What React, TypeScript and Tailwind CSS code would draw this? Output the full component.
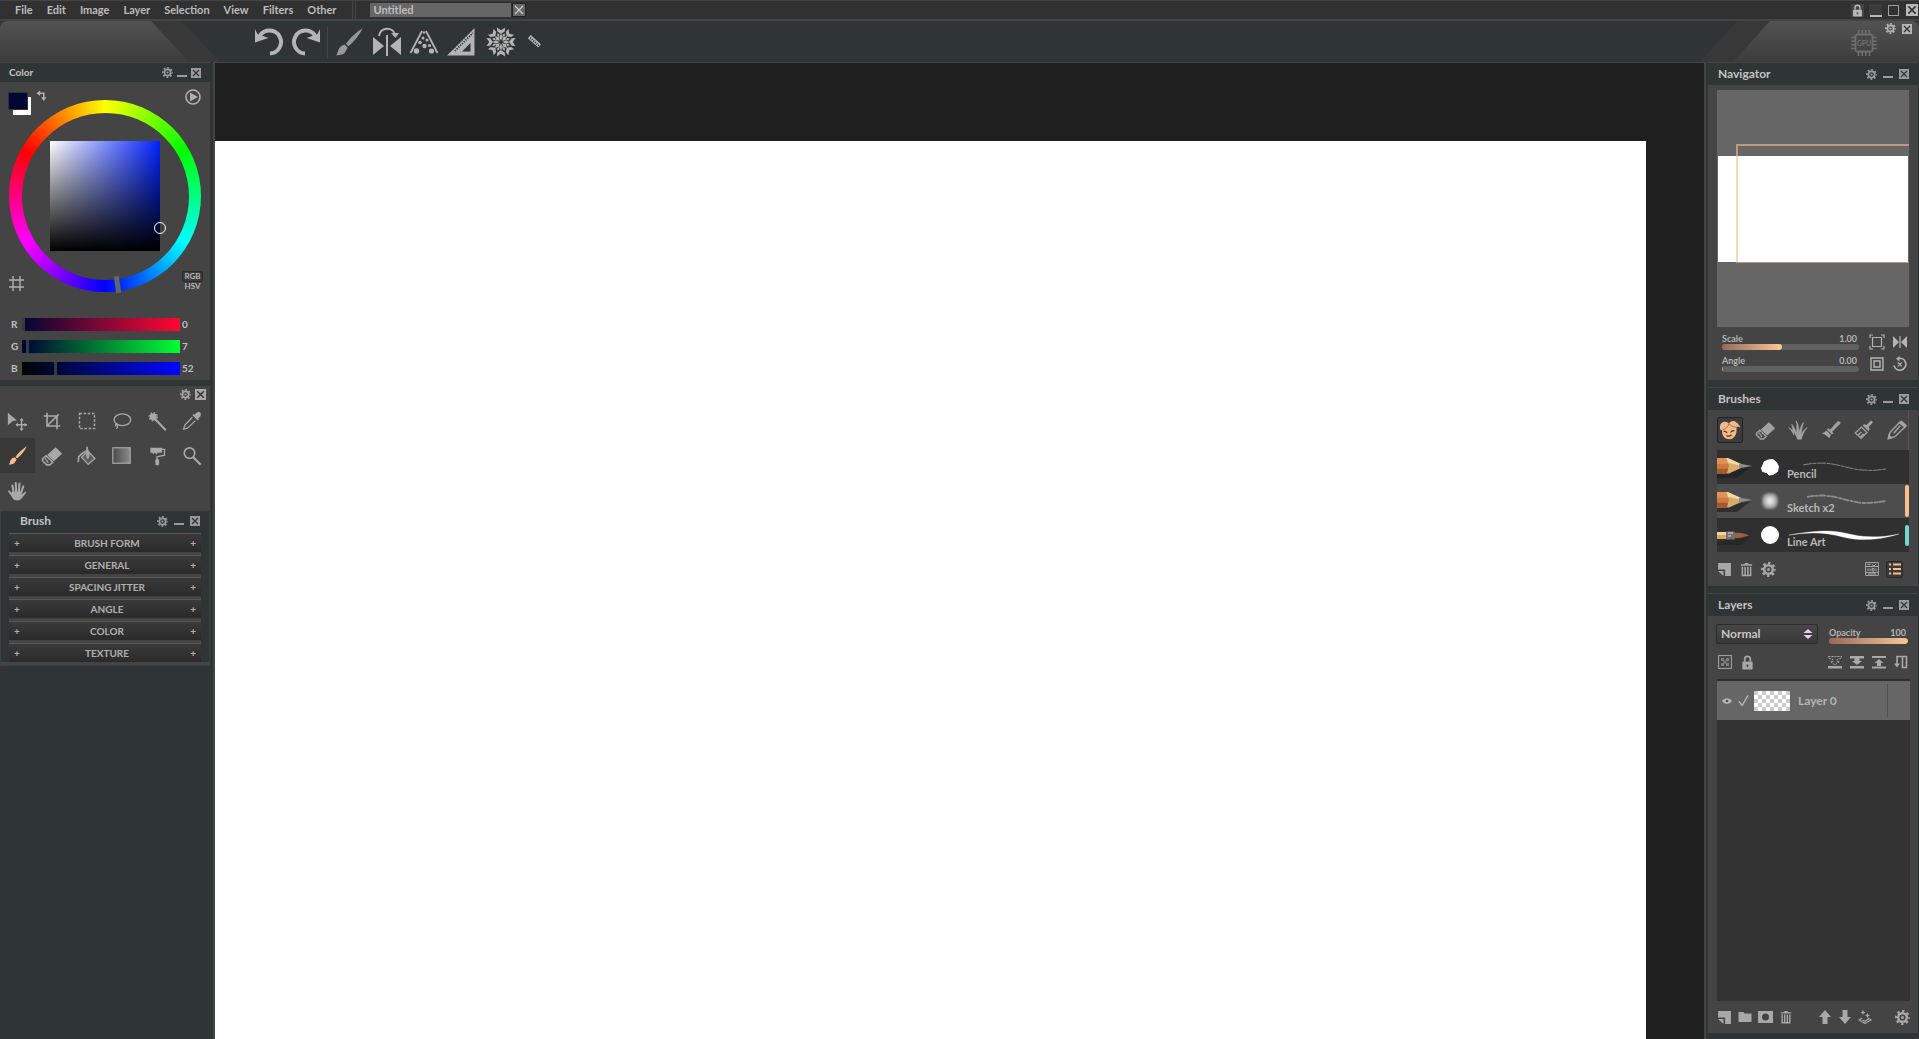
import { useState, type ReactNode } from "react";

const MENUS = ["File", "Edit", "Image", "Layer", "Selection", "View", "Filters", "Other"];

const BRUSH_SECTIONS = ["BRUSH FORM", "GENERAL", "SPACING JITTER", "ANGLE", "COLOR", "TEXTURE"];

type IconProps = { children: ReactNode; className?: string; box?: string };

function Svg({ children, className = "size-4", box = "0 0 24 24" }: IconProps) {
  return (
    <svg viewBox={box} className={`shrink-0 ${className}`} fill="currentColor" aria-hidden="true">
      {children}
    </svg>
  );
}

function Btn({ label, className = "", children }: { label: string; className?: string; children: ReactNode }) {
  return (
    <button type="button" aria-label={label} className={`flex shrink-0 items-center justify-center ${className}`}>
      {children}
    </button>
  );
}

/* ---------- small icons ---------- */

function Gear({ className = "size-[11px]" }: { className?: string }) {
  return (
    <Svg box="0 0 16 16" className={className}>
      <circle cx="8" cy="8" r="4.6" fill="none" stroke="currentColor" strokeWidth="2.6" />
      <circle cx="8" cy="8" r="6.8" fill="none" stroke="currentColor" strokeWidth="2.4" strokeDasharray="2.6 2.74" strokeDashoffset="1.3" />
      <circle cx="8" cy="8" r="1.6" />
    </Svg>
  );
}

function CloseBox({ className = "size-[10px]" }: { className?: string }) {
  return (
    <Svg box="0 0 10 10" className={className}>
      <rect width="10" height="10" />
      <path d="M2 2l6 6M8 2l-6 6" stroke="#333" strokeWidth="1.3" />
    </Svg>
  );
}

function Minimize() {
  return (
    <Svg box="0 0 10 10" className="size-[10px]">
      <rect y="7" width="10" height="2" />
    </Svg>
  );
}

function Trash({ className = "size-[15px]" }: { className?: string }) {
  return (
    <Svg box="0 0 16 16" className={className}>
      <path d="M6 1h4v1.500h4V4H2V2.500h4z" />
      <path d="M3.600 5v9.500h8.800V5M6.500 5v9M9.500 5v9" fill="none" stroke="currentColor" strokeWidth="1.600" />
    </Svg>
  );
}

function NewPage({ className = "size-[14px]" }: { className?: string }) {
  return (
    <Svg box="0 0 14 14" className={className}>
      <path d="M1 1h12v12H7.500V7H1z" />
      <path d="M1 8.500h5V13z" />
    </Svg>
  );
}

function Lock({ className = "size-[15px]" }: { className?: string }) {
  return (
    <Svg box="0 0 14 16" className={className}>
      <path d="M4 7V4.500a3 3 0 016 0V7" fill="none" stroke="currentColor" strokeWidth="1.800" />
      <rect x="1.500" y="7" width="11" height="8.500" rx="1" />
      <path d="M6 10h2l-.4 3H6.400z" fill="#444" />
    </Svg>
  );
}

function PaintBrush({ className = "size-5" }: { className?: string }) {
  return (
    <Svg className={className}>
      <path d="M23.500.5C19 3 12.500 9 9.500 13.500l2 2.200C16 12 21.500 5.500 23.500.5z" />
      <path d="M8.300 14.200l2.500 2.600c-.3 1.500-1.300 2-1.800 3.400C8.200 22.500 5 23.500.5 23.500c1.700-1.200 1.600-2.200 2.200-4.300.8-2.600 3.300-4.600 5.600-5z" />
    </Svg>
  );
}

function Eraser({ className = "size-5" }: { className?: string }) {
  return (
    <Svg className={className}>
      <path d="M16 2.500l7 7-9 8.200-7.300-6.900z" />
      <path d="M5.600 11.800l7.200 7-3.300 2.900H6.300l-4.600-4.500v-2z" fill="none" stroke="currentColor" strokeWidth="1.700" />
      <path d="M4.500 14.500l3.500 5" stroke="currentColor" strokeWidth="1.500" />
    </Svg>
  );
}

/* ---------- toolbar icons ---------- */

function Undo({ className = "" }: { className?: string }) {
  return (
    <Svg box="0 0 29 30" className={`h-[30px] w-[29px] ${className}`}>
      <path d="M5 8.500A11.500 11.500 0 1115 26.500" fill="none" stroke="currentColor" strokeWidth="4" />
      <path d="M0 2l2.500 5 11 4L0 15.500z" />
    </Svg>
  );
}

function Symmetry() {
  return (
    <Svg box="0 0 30 30" className="size-[30px]">
      <path d="M1 10l11 9-11 9zM29 10l-11 9 11 9z" />
      <rect x="14" y="8" width="2" height="21" />
      <path d="M7 9C8.500-.5 21-.5 23 7.500" fill="none" stroke="currentColor" strokeWidth="2" />
      <path d="M19 6h8l-3.500 5z" />
    </Svg>
  );
}

function Perspective() {
  return (
    <Svg box="0 0 30 30" className="size-[30px]">
      <path d="M13 4L1.500 26M17 4l11.500 22" stroke="currentColor" strokeWidth="1.800" />
      <circle cx="15" cy="5.500" r="1.200" />
      <circle cx="14" cy="11" r="1.500" />
      <circle cx="18" cy="13" r="1.500" />
      <circle cx="11" cy="15.500" r="1.800" />
      <circle cx="15.500" cy="19" r="2.200" />
      <circle cx="20.500" cy="18.500" r="1.600" />
      <circle cx="7.500" cy="24" r="2.800" />
      <circle cx="22.500" cy="24" r="2.600" />
    </Svg>
  );
}

function SetSquare() {
  return (
    <Svg box="0 0 30 30" className="size-[30px]">
      <path fillRule="evenodd" d="M28.500 1v27.500H1zM24.500 16v8.500H16z" />
      <path d="M8.500 23.500L26.500 5.500" stroke="#2f3335" strokeWidth="3" strokeDasharray="1.200 1.300" />
      <path d="M4.500 26.500L27 4" stroke="currentColor" />
    </Svg>
  );
}

function Snowflake() {
  return (
    <Svg box="-15 -15 30 30" className="size-[30px]">
      {[0, 45, 90, 135, 180, 225, 270, 315].map((a) => (
        <g key={a} transform={`rotate(${a})`}>
          <path d="M0-1.500l-1.800-3.500L0-8.500 1.800-5z" />
          <path d="M0-8l-3.800-2.700-.3-3.800L0-11.800l4.100-2.700-.3 3.800z" />
        </g>
      ))}
      {[22.5, 67.5, 112.5, 157.5, 202.5, 247.5, 292.5, 337.5].map((a) => (
        <path key={a} transform={`rotate(${a})`} d="M0-5.500l-1.200-2L0-9.500l1.200 2z" />
      ))}
    </Svg>
  );
}

function SmallRuler() {
  return (
    <Svg box="0 0 14 14" className="size-[15px]">
      <path d="M3.500 1L13 9.500l-2.500 3.200L.8 4z" />
      <path d="M3 3.500l8 7.300" stroke="#333" strokeWidth="1.600" strokeDasharray="1 1" />
    </Svg>
  );
}

function Gpu() {
  return (
    <svg viewBox="0 0 26 26" className="size-[26px] shrink-0 text-[#6e6e6e]" role="img" aria-label="GPU">
      <rect x="4.500" y="4.500" width="17" height="17" rx="1.500" fill="none" stroke="currentColor" strokeWidth="1.800" />
      <path
        d="M7.500 0v4M11.200 0v4M14.800 0v4M18.500 0v4M7.500 22v4M11.200 22v4M14.800 22v4M18.500 22v4M0 7.500h4M0 11.200h4M0 14.800h4M0 18.500h4M22 7.500h4M22 11.200h4M22 14.800h4M22 18.500h4"
        stroke="currentColor"
        strokeWidth="1.600"
      />
      <text x="13" y="15.500" textAnchor="middle" fontSize="7" fontWeight="700" fill="currentColor">
        GPU
      </text>
    </svg>
  );
}

/* ---------- tool palette ---------- */

const TOOLS: { name: string; icon: ReactNode }[] = [
  {
    name: "Move",
    icon: (
      <Svg className="size-5">
        <path d="M1 2l11 9.500-5 .6L1 17z" />
        <path d="M17.500 10v13M11 16.500h13" stroke="currentColor" strokeWidth="1.800" />
        <path d="M17.500 8.500l2.500 3h-5zM17.500 24l2.500-3h-5zM24 16.500l-3 2.500v-5zM10 16.500l3 2.500v-5z" />
      </Svg>
    ),
  },
  {
    name: "Crop",
    icon: (
      <Svg className="size-5">
        <path d="M6 2v16h16M2 6h16v16M6 18L20 4" fill="none" stroke="currentColor" strokeWidth="2" />
      </Svg>
    ),
  },
  {
    name: "Rectangle select",
    icon: (
      <Svg className="size-5">
        <rect x="3" y="3" width="18" height="18" fill="none" stroke="currentColor" strokeWidth="1.800" strokeDasharray="3 2" />
      </Svg>
    ),
  },
  {
    name: "Lasso",
    icon: (
      <Svg className="size-5">
        <ellipse cx="12.500" cy="10.500" rx="10" ry="7" fill="none" stroke="currentColor" strokeWidth="1.600" />
        <path d="M6 15.500c-2 .5-3 2-1 2.500s2-2 1-2.500c2 2 .5 4-.5 6" fill="none" stroke="currentColor" strokeWidth="1.300" />
      </Svg>
    ),
  },
  {
    name: "Magic wand",
    icon: (
      <Svg className="size-5">
        <circle cx="7.500" cy="7" r="4.300" />
        <circle cx="7.500" cy="7" r="5" fill="none" stroke="currentColor" strokeWidth="1.500" strokeDasharray="1.800 2.100" />
        <path d="M10 10l12.500 13" stroke="currentColor" strokeWidth="2.600" />
      </Svg>
    ),
  },
  {
    name: "Eyedropper",
    icon: (
      <Svg className="size-5">
        <path d="M17 2.500c2-2 5-1.500 5.500.5s-.5 4-2 5l-1 1 1 1-1.500 1.500-6.500-6.500L14 3.500l1.200 1z" />
        <path d="M12.500 7.500L3.500 17 1.800 21.800 6.600 20.500l9.500-9" fill="none" stroke="currentColor" strokeWidth="1.500" />
      </Svg>
    ),
  },
  { name: "Brush", icon: <PaintBrush className="size-[19px]" /> },
  { name: "Eraser", icon: <Eraser className="size-[22px]" /> },
  {
    name: "Fill",
    icon: (
      <Svg className="size-5">
        <path d="M13 6l8.500 9-8 7-8-8.500z" fillOpacity=".25" stroke="currentColor" strokeWidth="1.500" />
        <path d="M13 15.500c-3.200-2-2-8 0-12.500 2 4 3.200 10 0 12.500z" />
        <path d="M11 6c-4 2-7 4-9 7l-.5 6.500M12 1v8" fill="none" stroke="currentColor" strokeWidth="2" />
      </Svg>
    ),
  },
  {
    name: "Gradient",
    icon: (
      <svg viewBox="0 0 20 18" className="h-[17px] w-[19px]" aria-hidden="true">
        <defs>
          <linearGradient id="toolGrad">
            <stop stopColor="#4a4a4a" />
            <stop offset="1" stopColor="#8c8c8c" />
          </linearGradient>
        </defs>
        <rect x=".8" y=".8" width="18.400" height="16.400" fill="url(#toolGrad)" stroke="#a6a6a6" strokeWidth="1.300" />
      </svg>
    ),
  },
  {
    name: "Roller",
    icon: (
      <Svg className="size-5">
        <path d="M4 2h14v6H12.500l-1 2.500-2-2.500-2 2L6.500 8H4z" />
        <path d="M18 4h3v7l-9 2v4" fill="none" stroke="currentColor" strokeWidth="1.600" />
        <rect x="10" y="16" width="4.500" height="7" rx="1" />
      </Svg>
    ),
  },
  {
    name: "Zoom",
    icon: (
      <Svg className="size-5">
        <circle cx="9" cy="8.500" r="6.300" fill="none" stroke="currentColor" strokeWidth="2" />
        <path d="M13.500 13.500l9 9" stroke="currentColor" strokeWidth="2.800" />
      </Svg>
    ),
  },
  {
    name: "Hand",
    icon: (
      <Svg className="size-5">
        <path
          d="M8 14L6.500 5.500M11 13L10.500 2.500M14.200 13L15 3M17 14l2.500-7.500M7 17.500L2.500 12.500"
          stroke="currentColor"
          strokeWidth="2.500"
          strokeLinecap="round"
        />
        <path d="M6.500 12.500h11.500l-.5 4 4-3.500c1.300-.5 2 .5 1.200 1.500L17.500 21c-2 3-9 3-10.500 0L4 16z" />
      </Svg>
    ),
  },
];

/* ---------- brush presets ---------- */

const BRUSH_KINDS: { name: string; icon: ReactNode }[] = [
  {
    name: "Face",
    icon: (
      <Svg box="0 0 22 22" className="size-[22px]">
        <path
          d="M1.500 11C-.5 6 3 1.500 7.500 3c1 .3 2 1 2.500 1.500C12 1 17 .5 21.500 8.500c-1.200-.8-2.700-1-4-.5.5 5-.5 9.500-4 11.500-2.500 1.300-6.500.8-8.500-1.500-1.800-2-2-4.500-2-7z"
          fill="#f2b98a"
        />
        <path d="M10 4.500c1.500 2.500 4 3.800 7.500 3.500M10 4.500C9 8 7 10 3.500 10.500" fill="none" stroke="#a8683c" strokeWidth=".8" />
        <path d="M4.500 12.500c1.500-.3 3 .3 3.500 1.500M11.500 13.500c1-1.500 2.500-2 4-1.800M7.500 16.500c1.500 1 3.500.8 5-.5" fill="none" stroke="#5a3520" strokeWidth="1.200" />
      </Svg>
    ),
  },
  { name: "Erasers", icon: <Eraser className="size-[21px]" /> },
  {
    name: "Grass",
    icon: (
      <Svg className="size-5">
        <path d="M11.500 23C10 18 6 12 1 9c3 3 4.500 6 6 9C6 12 5 8 4.500 5c3 4 5 8 6 12C10.500 12 11 6 10 1c2.500 5 3.500 10 3 15C14.500 11 16 6 18.500 3 17 8 16 13 15.500 18c2-4 4.500-7 7.500-9-4 5-6 10-7 14z" stroke="currentColor" strokeWidth=".8" />
      </Svg>
    ),
  },
  {
    name: "Dry brush",
    icon: (
      <Svg className="size-5">
        <path d="M11 12l8.500-9.500c1-1 3-.5 3.500.5s-.5 1.500-1 2L13 14z" stroke="currentColor" />
        <path d="M8.500 9.500l6.500 6.500-2 1.500L7 11.500zM6.500 12.500l5.500 5.500-2 4C7 19 4 17 .5 16c2-.5 4-1.500 6-3.500z" />
      </Svg>
    ),
  },
  {
    name: "Wide brush",
    icon: (
      <Svg className="size-5">
        <path d="M9 8.500l6.500 6.500-7 7L1.500 15.500zM9 14l-4 4M11.500 16.500l-4 4" fill="none" stroke="currentColor" strokeWidth="1.600" />
        <path d="M10.500 6.500l7 7 1.500-2-1.500-3 4.500-4.500c1.500-2-1-4-2.500-2.500L15 6l-3-1z" />
      </Svg>
    ),
  },
  {
    name: "Pencils",
    icon: (
      <Svg className="size-5">
        <path d="M2 22l1.500-7L15 3l6.500 5.500L9.500 20z" fill="none" stroke="currentColor" strokeWidth="1.800" />
        <path d="M15 3l2-1.500 6 5-1.500 2zM1.500 22.500l.8-4 3 3zM8 16l8-9" stroke="currentColor" strokeWidth="1.800" />
      </Svg>
    ),
  },
];

function PencilArt() {
  return (
    <svg viewBox="0 0 36 34" className="h-[34px] w-[36px] shrink-0" aria-hidden="true">
      <path d="M0 24l20-4 14-3-14 11H0z" fill="#1c1c1c" fillOpacity=".6" />
      <path d="M0 8h10l14 6v4l-12 5.500H0z" fill="#d9ab6c" />
      <path d="M8 8h3l13 6v1.500L11 13z" fill="#f3d9a4" />
      <path d="M0 8h9c2 2 1 4 2 5.500H0z" fill="#e39055" />
      <path d="M0 13.500h11c1.500 2 1 3.500 0 5H0z" fill="#cd7a40" />
      <path d="M0 18.500h11c0 2-1 3.500-1 5H0z" fill="#a65a2c" />
      <path d="M22 13.600l13 2.500-13 2.200z" fill="#8f8f8f" />
    </svg>
  );
}

function RoundBrushArt() {
  return (
    <svg viewBox="0 0 36 34" className="h-[34px] w-[36px] shrink-0" aria-hidden="true">
      <path d="M0 24l34-5-10 8H0z" fill="#222" fillOpacity=".6" />
      <rect y="14" width="10" height="7" fill="#d9a760" />
      <rect y="14" width="10" height="3" fill="#f2d59a" />
      <rect x="9" y="13.500" width="9" height="8" rx="1" fill="#707070" />
      <path d="M11 15h5M11 18h3" stroke="#d8d8d8" />
      <path d="M18 15c5-1 10 1 14 2.200-4 1.300-9 3.300-14 2.500z" fill="#a2603f" />
    </svg>
  );
}

const PRESETS = [
  { name: "Pencil", art: <PencilArt />, tag: "", selected: false },
  { name: "Sketch x2", art: <PencilArt />, tag: "#f9be8c", selected: true },
  { name: "Line Art", art: <RoundBrushArt />, tag: "#76d6d4", selected: false },
];

function Tip({ name }: { name: string }) {
  if (name === "Pencil")
    return (
      <Svg box="0 0 20 20" className="size-5 text-white">
        <path d="M4 5l4-2 5-.5 3.500 3 2 4-1 5-4.500 3-4 .5-2.500-2.500-4-1L1.500 11 3 8z" stroke="#fff" strokeLinejoin="round" />
      </Svg>
    );
  if (name === "Sketch x2")
    return (
      <span className="flex size-5 shrink-0 items-center justify-center">
        <span className="size-4 rounded-md bg-[radial-gradient(circle,#e4e4e4_20%,#7a7a7a_80%)] blur-[1px]" />
      </span>
    );
  return (
    <Svg box="0 0 20 20" className="size-5 text-white">
      <circle cx="10" cy="10" r="9" />
    </Svg>
  );
}

function Stroke({ name }: { name: string }) {
  return (
    <svg viewBox="0 0 116 34" className="absolute inset-0 h-[34px] w-[116px]" aria-hidden="true" fill="none">
      {name === "Pencil" && (
        <path d="M16 15c30-6 40 4 60 5 10 1 16 0 23-1" stroke="#868686" strokeDasharray="9 .6 4 .5" />
      )}
      {name === "Sketch x2" && (
        <path d="M20 13c24-5 36 4 56 6 10 0 16-1 23-2" stroke="#8d8d8d" strokeWidth="1.800" strokeDasharray="7 .6 4 .4" />
      )}
      {name === "Line Art" && (
        <path d="M2 17c30-5 44-5 58-1.500s30 5 52 .5c-20 6-38 7.500-56 3S26 13.500 2 17z" fill="#fff" stroke="#fff" strokeWidth=".3" />
      )}
    </svg>
  );
}

/* ---------- building blocks ---------- */

function Panel({
  title,
  inset = "pl-[10px] pr-[9px]",
  header = "h-[22px] text-[12px]",
  gap = "gap-[6px]",
  className = "",
  children,
}: {
  title: string;
  inset?: string;
  header?: string;
  gap?: string;
  className?: string;
  children: ReactNode;
}) {
  return (
    <section className={`flex flex-col border-t border-[#444] bg-[#444] ${className}`}>
      <header className={`flex shrink-0 items-center bg-[#2f3434] ${header} ${inset}`}>
        <h2 className="flex-1 text-[#c4c4c4]">{title}</h2>
        <div className={`flex items-center text-[#9c9c9c] ${gap}`}>
          <Btn label={`${title} settings`}>
            <Gear />
          </Btn>
          <Btn label={`Minimize ${title}`}>
            <Minimize />
          </Btn>
          <Btn label={`Close ${title}`}>
            <CloseBox />
          </Btn>
        </div>
      </header>
      {children}
    </section>
  );
}

function Slider({ label, value, fill, max }: { label: string; value: string; fill: number; max: number }) {
  const id = `slider-${label}`;
  return (
    <div className="flex flex-col text-[9px] leading-[10px] text-[#b4b4b4]">
      <div className="flex justify-between pr-[2px]">
        <label htmlFor={id}>{label}</label>
        <output htmlFor={id}>{value}</output>
      </div>
      <div className="relative h-[6px] overflow-hidden rounded-full bg-[#606060]">
        <div className="h-full rounded-r-full bg-[linear-gradient(to_right,#97695c,#f8c896)]" style={{ width: `${fill}%` }} />
        <input
          id={id}
          type="range"
          min={0}
          max={max}
          defaultValue={(fill * max) / 100}
          className="absolute inset-0 m-0 h-full w-full appearance-none bg-transparent [&::-webkit-slider-thumb]:size-0 [&::-webkit-slider-thumb]:appearance-none"
        />
      </div>
    </div>
  );
}

function ChannelSlider({ label, initial, track }: { label: string; initial: number; track: string }) {
  const [value, setValue] = useState(initial);
  return (
    <div className="flex h-[13px] items-center text-[10px] leading-[13px] text-[#c0c0c0]">
      <label htmlFor={`ch-${label}`} className="w-[11px]">
        {label}
      </label>
      <input
        id={`ch-${label}`}
        type="range"
        min={0}
        max={255}
        value={value}
        onChange={(e) => setValue(Number(e.target.value))}
        className={`m-0 h-[13px] min-w-0 flex-1 appearance-none [&::-webkit-slider-thumb]:h-[13px] [&::-webkit-slider-thumb]:w-[3px] [&::-webkit-slider-thumb]:appearance-none [&::-webkit-slider-thumb]:bg-[#3a3a3a] ${track}`}
      />
      <output htmlFor={`ch-${label}`} className="w-[28px] pl-[2px]">
        {value}
      </output>
    </div>
  );
}

/* ---------- panels ---------- */

function ColorPanel() {
  return (
    <Panel title="Color" header="h-[19px] text-[10px]" inset="pl-[9px] pr-[9px]" gap="gap-1">
      <div className="relative mt-px flex justify-center pt-[17px]">
        <div className="flex size-[192px] items-center justify-center rounded-full bg-[conic-gradient(from_-60deg,#f00,#ff0,#0f0,#0ff,#00f,#f0f,#f00)]">
          <div className="flex size-[167px] items-center justify-center rounded-full bg-[#444]">
            <div className="size-[110px] bg-[linear-gradient(to_top,#000,transparent),linear-gradient(to_right,#fff,#0022ff)]" />
          </div>
        </div>
        {/* hue and shade markers */}
        <span className="absolute top-[193px] left-[115px] h-[17px] w-[5px] -rotate-8 bg-[#666]" />
        <span className="absolute top-[139px] left-[154px] size-[12px] rounded-full border border-white" />

        <button type="button" aria-label="Background color" className="absolute top-[14px] left-[13px] size-[18px] bg-white" />
        <button type="button" aria-label="Foreground color" className="absolute top-[9px] left-[8px] h-[18px] w-[20px] border border-[#333] bg-[#000734]" />
        <Btn label="Swap colors" className="absolute top-[7px] left-[36px] text-[#b0b0b0]">
          <Svg box="0 0 12 12" className="size-[11px]">
            <path d="M2 3.500h6.500V9" fill="none" stroke="currentColor" strokeWidth="1.700" />
            <path d="M4.500.5v6L.5 3.500zM5.500 8h6l-3 4z" />
          </Svg>
        </Btn>
        <Btn label="Play" className="absolute top-[6px] right-[9px] text-[#b0b0b0]">
          <Svg box="0 0 16 16" className="size-4">
            <circle cx="8" cy="8" r="7" fill="none" stroke="currentColor" strokeWidth="1.600" />
            <path d="M5 3.500L13 8l-8 4.500z" />
          </Svg>
        </Btn>
        <Btn label="Grid" className="absolute top-[193px] left-[9px] text-[#b0b0b0]">
          <Svg box="0 0 15 15" className="size-[15px]">
            <path d="M4 0v15M11 0v15M0 4h15M0 11h15" stroke="currentColor" strokeWidth="1.400" />
          </Svg>
        </Btn>
        <div className="absolute top-[188px] right-[7px] flex flex-col text-[8px] leading-[9px] text-[#b8b8b8]">
          <button type="button" className="w-[21px] rounded-xs border border-[#2a2a2a] bg-[#3a3a3a]">
            RGB
          </button>
          <button type="button">HSV</button>
        </div>
      </div>
      <div className="flex flex-col gap-[9px] pt-[26px] pb-[5px] pl-[11px] pr-[2px]">
        <ChannelSlider label="R" initial={0} track="bg-[linear-gradient(to_right,#000734,#ff0734)]" />
        <ChannelSlider label="G" initial={7} track="bg-[linear-gradient(to_right,#000034,#00ff34)]" />
        <ChannelSlider label="B" initial={52} track="bg-[linear-gradient(to_right,#000700,#0007ff)]" />
      </div>
    </Panel>
  );
}

function ToolPalette() {
  return (
    <section className="mt-[6px] bg-[#444] pb-[3px]">
      <div className="flex h-[17px] items-center justify-end gap-1 pr-[4px] text-[#a8a8a8]">
        <Btn label="Tool settings">
          <Gear className="size-[11px]" />
        </Btn>
        <Btn label="Close tools">
          <CloseBox className="size-[11px]" />
        </Btn>
      </div>
      <div className="mr-px grid grid-cols-6">
        {TOOLS.map((tool) => (
          <Btn
            key={tool.name}
            label={tool.name}
            className={tool.name === "Brush" ? "h-[35px] bg-[#383838] text-[#f8bd8a]" : "h-[35px] text-[#a8a8a8]"}
          >
            {tool.icon}
          </Btn>
        ))}
      </div>
    </section>
  );
}

function BrushSettings() {
  return (
    <section className="border border-t-0 border-[#3e4143]">
      <header className="flex h-[22px] items-center pr-[9px] pb-[2px] pl-[19px] text-[12px]">
        <h2 className="flex-1 text-[#c4c4c4]">Brush</h2>
        <div className="flex items-center gap-[6px] text-[#9c9c9c]">
          <Btn label="Brush settings">
            <Gear />
          </Btn>
          <Btn label="Minimize Brush">
            <Minimize />
          </Btn>
          <Btn label="Close Brush">
            <CloseBox />
          </Btn>
        </div>
      </header>
      <div className="mx-2 bg-[#444]">
        {BRUSH_SECTIONS.map((name) => (
          <button
            key={name}
            type="button"
            className="mb-[3px] flex h-[19px] w-full items-center justify-between border-t border-[#5a5a5a] bg-[linear-gradient(#3a3a3a,#2a2a2a)] px-[5px] text-[10px] text-[#b0b0b0] last:mb-0"
          >
            <span>+</span>
            <span className="pl-1">{name}</span>
            <span>+</span>
          </button>
        ))}
      </div>
      <div className="h-[3px] bg-[#444]" />
    </section>
  );
}

function Navigator() {
  return (
    <Panel title="Navigator">
      <div className="flex flex-col px-[9px] pt-[5px] pb-[8px]">
        <div className="relative flex h-[237px] flex-col overflow-hidden bg-[#666] px-px pt-[66px]">
          <div className="h-[106px] bg-white" />
          <div className="absolute top-[54px] -right-[2px] left-[19px] h-[119px] border border-t-2 border-l-2 border-[#f8bd8a]/60" />
        </div>
        <div className="flex items-center justify-between pt-[7px] pl-[5px]">
          <div className="flex w-[137px] flex-col gap-[6px]">
            <Slider label="Scale" value="1.00" fill={44} max={100} />
            <Slider label="Angle" value="0.00" fill={1} max={360} />
          </div>
          <div className="grid grid-cols-2 gap-x-[7px] gap-y-[6px] pr-px text-[#b4b4b4]">
            <Btn label="Fit to window">
              <Svg box="0 0 16 16" className="size-4">
                <path d="M1 4V1h3M12 1h3v3M15 12v3h-3M4 15H1v-3M3.500 3.500h9v9h-9z" fill="none" stroke="currentColor" strokeWidth="1.200" />
              </Svg>
            </Btn>
            <Btn label="Flip">
              <Svg box="0 0 16 16" className="size-4">
                <path d="M1 2l6 6-6 6zM15 2L9 8l6 6zM7.400 2h1.200v12H7.400z" />
              </Svg>
            </Btn>
            <Btn label="Actual size">
              <Svg box="0 0 16 16" className="size-4">
                <path d="M2 2h12v12H2zM5 5h6v6H5z" fill="none" stroke="currentColor" strokeWidth="1.400" />
              </Svg>
            </Btn>
            <Btn label="Reset rotation">
              <Svg box="0 0 16 16" className="size-4">
                <path d="M6 2.500a6 6 0 11-4 7" fill="none" stroke="currentColor" strokeWidth="1.600" />
                <path d="M7.500 0v5.500L4 2.700z" />
                <path d="M5.800 6.300l4 4M9.800 6.300l-4 4" stroke="currentColor" strokeWidth="1.200" />
              </Svg>
            </Btn>
          </div>
        </div>
      </div>
    </Panel>
  );
}

function Brushes() {
  return (
    <Panel title="Brushes" className="mt-[7px]">
      <div className="flex flex-col px-[9px]">
        <div className="flex h-[40px] items-center justify-between border-r border-[#555] text-[#a2a2a2]">
          {BRUSH_KINDS.map((kind, i) => (
            <Btn
              key={kind.name}
              label={kind.name}
              className={i === 0 ? "size-[26px] rounded-xs border border-[#222] bg-[#3c3c3c]" : "size-[22px]"}
            >
              {kind.icon}
            </Btn>
          ))}
        </div>
        <ul>
          {PRESETS.map((p) => (
            <li key={p.name}>
              <button
                type="button"
                className={`flex h-[34px] w-full items-center ${p.selected ? "bg-[#4d4d4d]" : "bg-[#303030]"}`}
              >
                {p.art}
                <span className="ml-[7px] flex">
                  <Tip name={p.name} />
                </span>
                <span className="relative ml-[7px] flex h-full flex-1 items-end pb-[3px] text-[11px] leading-[14px] text-[#b8b8b8]">
                  <Stroke name={p.name} />
                  {p.name}
                </span>
                <span
                  className={p.selected ? "h-[32px] w-1 rounded-xs" : "h-[21px] w-1 rounded-xs"}
                  style={{ backgroundColor: p.tag || "transparent" }}
                />
              </button>
            </li>
          ))}
        </ul>
        <div className="flex h-[34px] items-center gap-[7px] pr-[6px] text-[#a8a8a8]">
          <Btn label="New brush">
            <NewPage className="size-[15px]" />
          </Btn>
          <Btn label="Delete brush">
            <Trash />
          </Btn>
          <Btn label="Brush options">
            <Gear className="size-[15px]" />
          </Btn>
          <span className="flex-1" />
          <Btn label="Preview view">
            <Svg box="0 0 14 14" className="size-[14px]">
              <path d="M.6.6h12.800v12.800H.6zM1 4.500h12M1 10.500h12M2.500 2.500h3M7 2.500l2 1.500 2-2M3 6.500v2.500M5 6.500v2.500M7 6.500h2v2.500H7zM11 6.500v2.500M3 12h8" fill="none" stroke="currentColor" />
            </Svg>
          </Btn>
          <Btn label="List view" className="size-[17px] rounded-xs border border-[#2a2a2a] bg-[#3a3a3a] text-[#f8bd8a]">
            <Svg box="0 0 14 14" className="size-[14px]">
              <path d="M5 2.500h8M5 7h8M5 11.500h8" stroke="currentColor" strokeWidth="1.800" />
              <path d="M1 1.500h2v2H1zM1 6h2v2H1zM1 10.500h2v2H1z" />
            </Svg>
          </Btn>
        </div>
      </div>
    </Panel>
  );
}

function Layers() {
  return (
    <Panel title="Layers" className="mt-[7px] min-h-0 flex-1">
      <div className="flex min-h-0 flex-1 flex-col px-[8px]">
        <div className="mt-[8px] flex items-end justify-between pr-[2px]">
          <div className="relative w-[102px]">
            <select
              aria-label="Blend mode"
              className="block h-[20px] w-full appearance-none rounded-xs border border-[#2c2c2c] bg-[linear-gradient(#474747,#383838)] pl-[4px] text-[12px] leading-[18px] text-[#c4c4c4]"
            >
              <option>Normal</option>
              <option>Multiply</option>
              <option>Screen</option>
            </select>
            <Svg box="0 0 10 10" className="pointer-events-none absolute top-[5px] right-[5px] size-[10px] text-[#e9cdea]">
              <path d="M5 0l4.500 4H.5zM5 10L.5 6h9z" />
            </Svg>
          </div>
          <div className="w-[79px]">
            <Slider label="Opacity" value="100" fill={100} max={100} />
          </div>
        </div>
        <div className="mt-[8px] flex h-[20px] items-center gap-[8px] px-[2px] text-[#a8a8a8]">
          <Btn label="Lock transparency">
            <Svg box="0 0 14 14" className="size-[14px]">
              <rect x=".6" y=".6" width="12.800" height="12.800" fill="none" stroke="currentColor" />
              <path fillOpacity=".6" d="M3 3h3v3H3zM8 3h3v3H8zM5.500 5.500h3v3h-3zM3 8h3v3H3zM8 8h3v3H8z" />
            </Svg>
          </Btn>
          <Btn label="Lock layer">
            <Lock />
          </Btn>
          <span className="flex-1" />
          <Btn label="Merge outline">
            <Svg box="0 0 14 14" className="size-[14px]">
              <path d="M0 11h14v2.500H0z" />
              <path d="M.5 1.500h13v1.500L9 4.500v2h2.500L7 10 2.500 6.500H5v-2L.5 3z" fill="none" stroke="currentColor" strokeDasharray="2 1" />
            </Svg>
          </Btn>
          <Btn label="Merge down">
            <Svg box="0 0 14 14" className="size-[14px]">
              <path d="M0 11h14v2.500H0zM0 1h14v2.500H9.500V6H12l-5 4-5-4h2.500V3.500H0z" />
            </Svg>
          </Btn>
          <Btn label="Merge up">
            <Svg box="0 0 14 14" className="size-[14px]">
              <path d="M0 1h14v2H0zM0 11.500h14v2H0zM7 4l4.500 4H9v3H5V8H2.500z" />
            </Svg>
          </Btn>
          <Btn label="Clip layer">
            <Svg box="0 0 14 14" className="size-[14px]">
              <path d="M8.500 1.500h4v11h-4zM8 1.500H3V10" fill="none" stroke="currentColor" strokeWidth="1.600" />
              <path d="M0 8.500h6L3 12.500z" />
            </Svg>
          </Btn>
        </div>
        <ul className="mt-[7px] ml-px min-h-0 flex-1 border-t-2 border-[#2e2e2e] bg-[#333]">
          <li className="flex h-[39px] items-center bg-[#666] text-[#b4b4b4]">
            <Btn label="Toggle visibility" className="ml-[5px]">
              <Svg box="0 0 12 12" className="size-[10px]">
                <path d="M0 6c3-4.500 9-4.500 12 0-3 4.500-9 4.500-12 0z" />
                <circle cx="6" cy="6" r="1.500" fill="#555" />
              </Svg>
            </Btn>
            <Btn label="Use layer" className="ml-[6px]">
              <Svg box="0 0 12 12" className="size-[11px]">
                <path d="M1 7l3.500 4.500L11 .5" fill="none" stroke="currentColor" strokeWidth="1.600" />
              </Svg>
            </Btn>
            <span className="ml-[5px] h-[20px] w-[36px] bg-[conic-gradient(#fff_25%,#ccc_0_50%,#fff_0_75%,#ccc_0)] bg-size-[8px_8px]" />
            <span className="ml-2 flex-1 text-[12px]">Layer 0</span>
            <span className="mr-[22px] h-[33px] w-px bg-[#505050]" />
          </li>
        </ul>
        <div className="flex h-[32px] shrink-0 items-center gap-[6px] pl-px text-[#a8a8a8]">
          <Btn label="New layer">
            <NewPage className="size-[15px]" />
          </Btn>
          <Btn label="New folder">
            <Svg box="0 0 14 12" className="h-[12px] w-[14px]">
              <path d="M.5 1h5l1 1.500h7V11H.5z" />
            </Svg>
          </Btn>
          <Btn label="Layer mask">
            <Svg box="0 0 15 12" className="h-[12px] w-[15px]">
              <path fillRule="evenodd" d="M0 0h15v12H0zM7.500 2.500a3.500 3.500 0 100 7 3.500 3.500 0 000-7z" />
            </Svg>
          </Btn>
          <Btn label="Delete layer">
            <Trash className="size-[14px]" />
          </Btn>
          <Btn label="Move up" className="ml-[19px]">
            <Svg box="0 0 14 14" className="size-[14px]">
              <path d="M7 0l6 7H9.500v7h-5V7H1z" />
            </Svg>
          </Btn>
          <Btn label="Move down">
            <Svg box="0 0 14 14" className="size-[14px]">
              <path d="M7 14l6-7H9.500V0h-5v7H1z" />
            </Svg>
          </Btn>
          <Btn label="Layer effects">
            <Svg box="0 0 14 14" className="size-[14px]">
              <path d="M4 8L1 10l6 3.500 6-3.500-3-2M4.500 10L7 11.200 11 8.500" fill="none" stroke="currentColor" strokeWidth="1.200" />
              <path d="M5 0l.8 1.700L7.500 2.500l-1.700.8L5 5l-.8-1.700L2.500 2.500l1.700-.8zM9.500 3l.8 1.700 1.700.8-1.700.8-.8 1.700-.8-1.700L7 5.500l1.700-.8z" />
            </Svg>
          </Btn>
          <span className="flex-1" />
          <Btn label="Layer options">
            <Gear className="size-[15px]" />
          </Btn>
        </div>
      </div>
    </Panel>
  );
}

/* ---------- app ---------- */

export default function App() {
  return (
    <div className="flex h-screen flex-col overflow-hidden bg-[#2f3434] font-['Lato','Open_Sans',sans-serif] font-bold text-[#bcbcbc]">
      <nav className="flex h-[21px] shrink-0 items-center border-t border-b-2 border-[#444] bg-[#313131] text-[11px]">
        <div className="flex gap-[14px] pl-[15px]">
          {MENUS.map((m) => (
            <button key={m} type="button">
              {m}
            </button>
          ))}
        </div>
        <span className="ml-[16px] h-full w-1 border-x border-[#444]" />
        <div className="ml-[14px] flex items-center gap-px">
          <button type="button" className="h-[14px] w-[141px] bg-[#666] pl-[3px] text-left leading-[14px]">
            Untitled
          </button>
          <Btn label="Close Untitled" className="size-[14px] border border-[#222] bg-[#666]">
            <Svg box="0 0 10 10" className="size-[10px]">
              <path d="M1 1l8 8M9 1L1 9" stroke="#ccc" strokeWidth="1.200" />
            </Svg>
          </Btn>
        </div>
        <div className="ml-auto flex items-center gap-[5px] pr-px text-[#b8b8b8]">
          <Btn label="Lock interface" className="size-[13px] bg-[#444]">
            <Lock className="size-[13px]" />
          </Btn>
          <Btn label="Minimize window" className="size-[13px] items-end bg-[#3c3c3c]">
            <Svg box="0 0 12 3" className="h-[3px] w-[12px]">
              <path d="M0 1h12v2H0z" />
            </Svg>
          </Btn>
          <Btn label="Maximize window" className="size-[13px]">
            <span className="size-[11px] border border-[#a0a0a0]" />
          </Btn>
          <Btn label="Close window" className="size-[13px]">
            <CloseBox className="size-[12px]" />
          </Btn>
        </div>
      </nav>

      <div className="flex h-[41px] shrink-0 items-center text-[#b4b4b4]">
        <div className="h-full w-[220px] shrink-0 bg-[#383838] [clip-path:polygon(0_0,182px_0,100%_100%,0_100%)]">
          <div className="h-full w-[189px] rounded-tl-lg bg-[linear-gradient(#525252,#3c3c3c)] [clip-path:polygon(0_0,151px_0,100%_100%,0_100%)]" />
        </div>
        <div className="ml-[35px] flex items-center gap-[7px]">
          <Btn label="Undo">
            <Undo />
          </Btn>
          <Btn label="Redo">
            <Undo className="-scale-x-100" />
          </Btn>
          <span className="h-[32px] w-px bg-[#444]" />
          <Btn label="Brush tool" className="text-[#999]">
            <PaintBrush className="size-[28px]" />
          </Btn>
          <Btn label="Symmetry" className="ml-[2px]">
            <Symmetry />
          </Btn>
          <Btn label="Perspective">
            <Perspective />
          </Btn>
          <Btn label="Ruler">
            <SetSquare />
          </Btn>
          <Btn label="Kaleidoscope" className="ml-[3px]">
            <Snowflake />
          </Btn>
          <Btn label="Guides" className="ml-[4px]">
            <SmallRuler />
          </Btn>
        </div>
        <div className="ml-auto h-full w-[219px] bg-[#383838] [clip-path:polygon(37px_0,100%_0,100%_100%,0_100%)]">
          <div className="ml-[33px] flex h-full justify-end rounded-tr-lg bg-[linear-gradient(#525252,#3c3c3c)] pr-[7px] [clip-path:polygon(37px_0,100%_0,100%_100%,0_100%)]">
            <span className="mt-[9px] mr-[8px]">
              <Gpu />
            </span>
            <div className="mt-[2px] flex h-[11px] items-center gap-[6px]">
              <Btn label="Toolbar settings">
                <Gear />
              </Btn>
              <Btn label="Close toolbar">
                <CloseBox />
              </Btn>
            </div>
          </div>
        </div>
      </div>

      <div className="flex min-h-0 flex-1">
        <aside className="flex w-[215px] shrink-0 flex-col border-r-2 border-[#444] pr-[3px]">
          <ColorPanel />
          <ToolPalette />
          <BrushSettings />
        </aside>
        <main className="flex min-w-0 flex-1 flex-col border-t border-[#444] bg-[#1f1f1f] pt-[78px] pr-[58px]">
          <div className="flex-1 bg-white" />
        </main>
        <aside className="flex w-[215px] shrink-0 flex-col border-l-2 border-[#444] pr-px pb-[6px] pl-[2px]">
          <Navigator />
          <Brushes />
          <Layers />
        </aside>
      </div>
    </div>
  );
}
